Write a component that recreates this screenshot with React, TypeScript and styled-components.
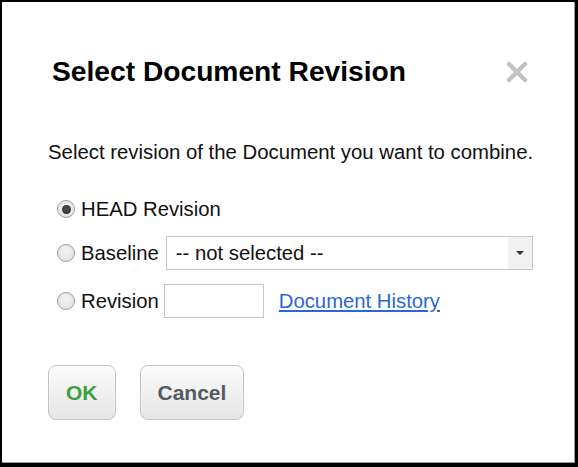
import React from "react";
import styled, { createGlobalStyle } from "styled-components";

const Global = createGlobalStyle`
  html, body { margin: 0; padding: 0; background: #fff; }
  body { font-family: Arial, "Liberation Sans", Helvetica, sans-serif; }
  * { box-sizing: border-box; }
`;

const Frame = styled.div`
  width: 578px;
  height: 467px;
  border-style: solid;
  border-color: #000;
  border-width: 2px 3px 4px 2px;
  background: #fff;
`;

const Inner = styled.div`
  height: 100%;
  border-right: 1px solid #9a9a9a;
  border-bottom: 1px solid #9a9a9a;
  padding: 53px 41px 0 46px;
  display: flex;
  flex-direction: column;
`;

const Header = styled.div`
  display: flex;
  align-items: center;
  justify-content: space-between;
  height: 32px;
`;

const Title = styled.h1`
  margin: 0 0 0 4px;
  font-size: 28.2px;
  line-height: 32px;
  font-weight: bold;
  color: #000;
`;

const Close = styled.button`
  border: 0;
  background: transparent;
  padding: 0;
  margin: 2px 5px 0 0;
  width: 22px;
  height: 22px;
  display: flex;
  cursor: pointer;
`;

const Description = styled.p`
  margin: 53px 0 0 0;
  font-size: 20.35px;
  line-height: 24px;
  white-space: nowrap;
  color: #111;
`;

const Options = styled.div`
  display: flex;
  flex-direction: column;
  margin-top: 30px;
`;

const Row = styled.label<{ $gap: number; $h: number }>`
  display: flex;
  align-items: center;
  height: ${(p) => p.$h}px;
  margin-top: ${(p) => p.$gap}px;
  padding-left: 9px;
  font-size: 20.3px;
  color: #111;
`;

const Radio = styled.span<{ $checked?: boolean }>`
  width: 18px;
  height: 18px;
  border-radius: 50%;
  border: 1px solid #a0a0a0;
  background: radial-gradient(circle at 50% 40%, #f4f4f4 0%, #dcdcdc 100%);
  display: flex;
  align-items: center;
  justify-content: center;
  margin-right: 6px;
  flex: none;
  &::after {
    content: "";
    display: ${(p) => (p.$checked ? "block" : "none")};
    width: 9px;
    height: 9px;
    border-radius: 50%;
    background: radial-gradient(circle at 50% 40%, #555 0%, #222 100%);
  }
`;

const RowText = styled.span`
  line-height: 24px;
  white-space: nowrap;
`;

const Select = styled.div`
  flex: 1;
  height: 34px;
  margin-left: 7px;
  border: 1px solid #c6c6c6;
  display: flex;
  align-items: stretch;
  background: #fff;
`;

const SelectValue = styled.span`
  flex: 1;
  padding-left: 9px;
  display: flex;
  align-items: center;
  font-size: 20.3px;
  color: #111;
`;

const Arrow = styled.span`
  width: 24px;
  background: #f1f1f1;
  display: flex;
  align-items: center;
  justify-content: center;
  &::after {
    content: "";
    border-left: 4px solid transparent;
    border-right: 4px solid transparent;
    border-top: 4px solid #333;
  }
`;

const TextInput = styled.input`
  width: 100px;
  height: 34px;
  margin-left: 5px;
  border: 1px solid #c6c6c6;
  font-size: 20px;
  padding: 0 6px;
  outline: none;
`;

const Link = styled.a`
  margin-left: 15px;
  color: #2a66d9;
  text-decoration: underline;
  font-size: 20.3px;
  white-space: nowrap;
  cursor: pointer;
`;

const Buttons = styled.div`
  display: flex;
  gap: 24px;
  margin-top: 47px;
`;

const Button = styled.button<{ $color: string }>`
  height: 55px;
  padding: 0 17px;
  border: 1px solid #c4c4c4;
  border-radius: 8px;
  background: linear-gradient(#fbfbfb, #e6e6e6);
  font-family: Arial, "Liberation Sans", sans-serif;
  font-weight: bold;
  font-size: 21px;
  color: ${(p) => p.$color};
  cursor: pointer;
`;

export default function App() {
  return (
    <>
      <Global />
      <Frame>
        <Inner>
          <Header>
            <Title>Select Document Revision</Title>
            <Close aria-label="close">
              <svg width="22" height="22" viewBox="0 0 22 22">
                <path
                  d="M3 3 L19 19 M19 3 L3 19"
                  stroke="#c2c2c2"
                  strokeWidth="4.5"
                  strokeLinecap="round"
                />
              </svg>
            </Close>
          </Header>
          <Description>Select revision of the Document you want to combine.</Description>
          <Options>
            <Row $gap={0} $h={30}>
              <Radio $checked />
              <RowText>HEAD Revision</RowText>
            </Row>
            <Row $gap={12} $h={34}>
              <Radio />
              <RowText>Baseline</RowText>
              <Select>
                <SelectValue>-- not selected --</SelectValue>
                <Arrow />
              </Select>
            </Row>
            <Row $gap={14} $h={34}>
              <Radio />
              <RowText>Revision</RowText>
              <TextInput />
              <Link>Document History</Link>
            </Row>
          </Options>
          <Buttons>
            <Button $color="#3f9f3f">OK</Button>
            <Button $color="#555a62">Cancel</Button>
          </Buttons>
        </Inner>
      </Frame>
    </>
  );
}
